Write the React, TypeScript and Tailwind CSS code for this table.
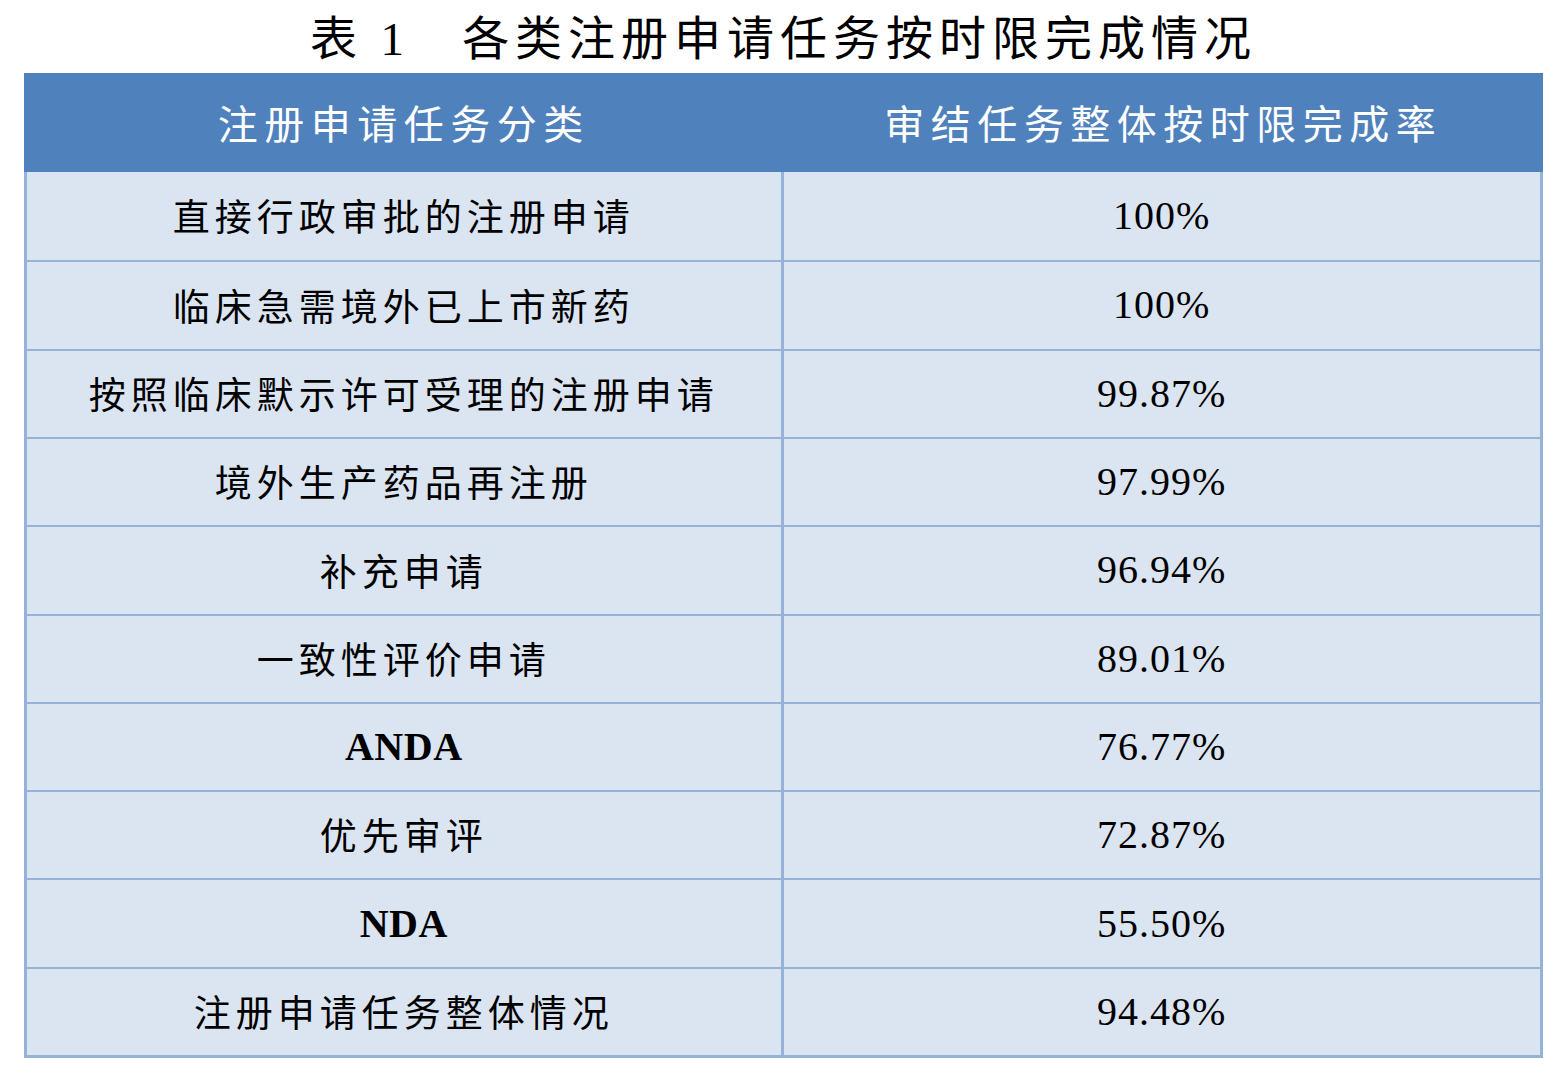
const rows: { name: string; rate: string; latin?: boolean }[] = [
  { name: "直接行政审批的注册申请", rate: "100%" },
  { name: "临床急需境外已上市新药", rate: "100%" },
  { name: "按照临床默示许可受理的注册申请", rate: "99.87%" },
  { name: "境外生产药品再注册", rate: "97.99%" },
  { name: "补充申请", rate: "96.94%" },
  { name: "一致性评价申请", rate: "89.01%" },
  { name: "ANDA", rate: "76.77%", latin: true },
  { name: "优先审评", rate: "72.87%" },
  { name: "NDA", rate: "55.50%", latin: true },
  { name: "注册申请任务整体情况", rate: "94.48%" },
];

export default function App() {
  return (
    <div className="h-[1085px] w-[1567px] bg-white">
      <div className="flex h-[73px] items-center justify-center pt-[6px] font-['Liberation_Serif','Noto_Sans_CJK_SC',serif] text-[47px] leading-none text-black">
        <span className="tracking-[6px]">表 1</span>
        <span className="ml-[52px] tracking-[6px]">各类注册申请任务按时限完成情况</span>
      </div>
      <div className="mx-[24px] flex flex-col">
        <div className="grid h-[99px] grid-cols-2 bg-[#4f81bd] font-['Noto_Sans_CJK_SC',sans-serif] text-[40px] tracking-[6.5px] text-white">
          <div className="flex items-center justify-center pb-[2px]">注册申请任务分类</div>
          <div className="flex items-center justify-center pb-[2px]">审结任务整体按时限完成率</div>
        </div>
        <div className="grid h-[886px] grid-rows-10 border-x-[3px] border-b-[3px] border-[#95b3d7] bg-[#dbe5f1]">
          {rows.map((r, i) => (
            <div key={i} className={"grid grid-cols-2 " + (i > 0 ? "border-t-2 border-[#95b3d7]" : "")}>
              <div className="flex items-center justify-center border-r-[3px] border-[#95b3d7] text-black">
                {r.latin ? (
                  <span className="font-['Liberation_Serif',serif] text-[40px] font-bold tracking-[0.5px]">{r.name}</span>
                ) : (
                  <span className="font-['Noto_Sans_CJK_SC',sans-serif] text-[37px] tracking-[5px]">{r.name}</span>
                )}
              </div>
              <div className="flex items-center justify-center font-['Liberation_Serif',serif] text-[40px] tracking-[1px] text-black">
                {r.rate}
              </div>
            </div>
          ))}
        </div>
      </div>
    </div>
  );
}
